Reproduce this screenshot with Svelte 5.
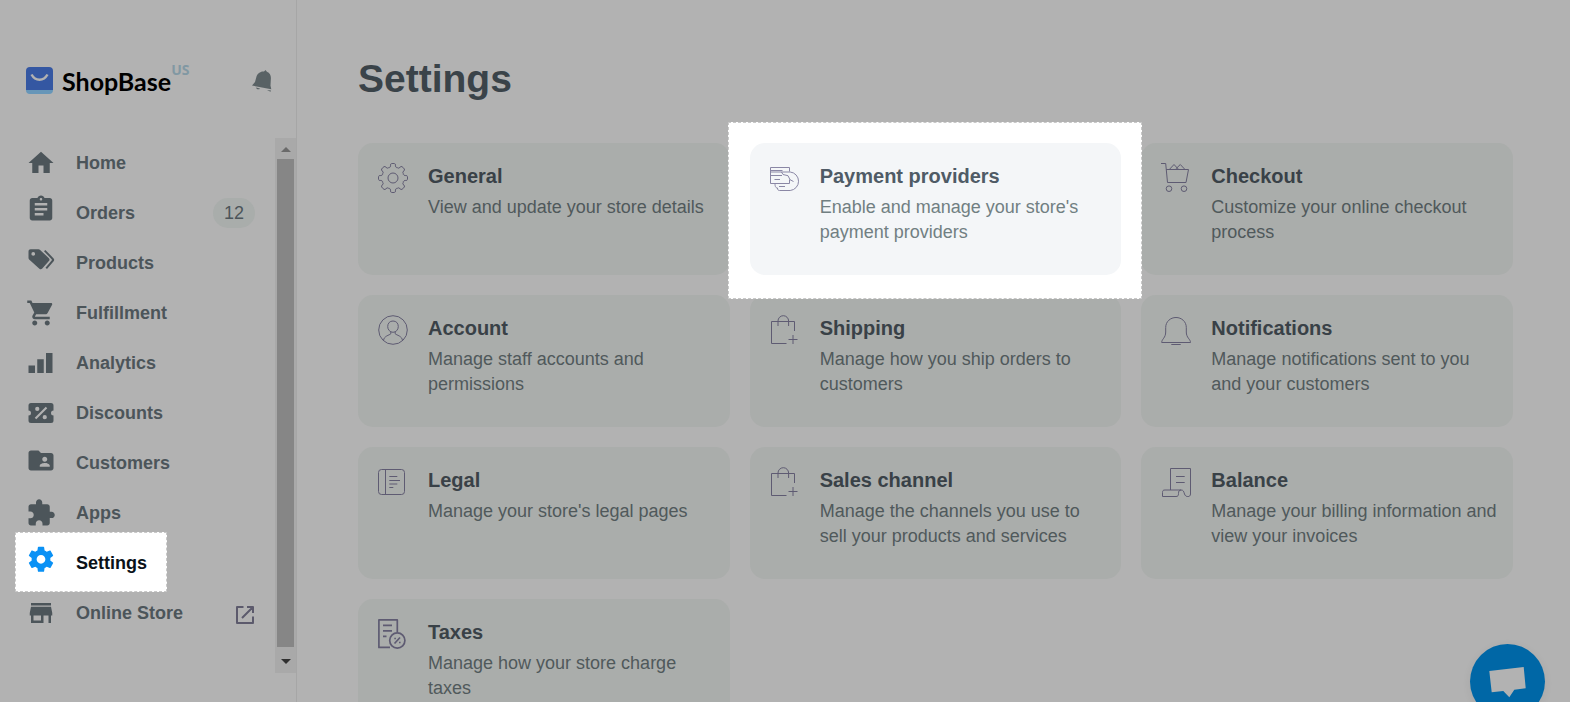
<script lang="ts">
  type NavItem = { label: string; icon: string; shift?: number; badge?: string; external?: boolean; active?: boolean };
  type Card = { title: string; text: string; icon: string; spotlight?: boolean };

  // shift moves the glyph up inside its 24-unit box
  const nav: NavItem[] = [
    { label: 'Home', icon: 'M10 20v-6h4v6h5v-8h3L12 3 2 12h3v8z' },
    {
      label: 'Orders',
      shift: 3,
      badge: '12',
      icon: 'M19 3h-4.18C14.4 1.84 13.3 1 12 1s-2.4.84-2.82 2H5c-1.1 0-2 .9-2 2v14c0 1.1.9 2 2 2h14c1.1 0 2-.9 2-2V5c0-1.1-.9-2-2-2zm-7 0c.55 0 1 .45 1 1s-.45 1-1 1-1-.45-1-1 .45-1 1-1zm2 14H7v-2h7v2zm3-4H7v-2h10v2zm0-4H7V7h10v2z'
    },
    {
      label: 'Products',
      shift: 3,
      icon: 'M3.7 4H10c.5 0 .9.200 1.300.500l7 6.700c.7.700.7 1.500 0 2.200l-5.300 6c-.7.800-1.600.800-2.300.100L2.500 12.200C2.200 11.900 2 11.500 2 11V5.700C2 4.700 2.700 4 3.700 4zM5.800 6.200a1.500 1.500 0 1 0 0 3 1.500 1.500 0 0 0 0-3zM14.400 5.500l1.100-1 6.600 6.800c.6.700.6 1.500 0 2.200L16.800 19.700l-1.200-1 4.900-5.700c.3-.3.3-.700 0-1z'
    },
    {
      label: 'Fulfillment',
      icon: 'M7 18c-1.100 0-1.990.9-1.990 2S5.900 22 7 22s2-.9 2-2-.9-2-2-2zM1 2v2h2l3.600 7.590-1.350 2.450c-.16.28-.25.61-.25.960 0 1.100.9 2 2 2h12v-2H7.420c-.14 0-.25-.11-.25-.25l.03-.12.9-1.630h7.450c.75 0 1.410-.41 1.750-1.030l3.580-6.490c.08-.14.12-.31.12-.48 0-.55-.45-1-1-1H5.210l-.94-2H1zm16 16c-1.100 0-1.990.9-1.990 2s.89 2 1.990 2 2-.9 2-2-.9-2-2-2z'
    },
    { label: 'Analytics', icon: 'M2 14h5.200v6H2zM9 9h5.200v11H9zM16 4h5.200v16H16z' },
    {
      label: 'Discounts',
      icon: 'M22 10V6a2 2 0 0 0-2-2H4a2 2 0 0 0-2 2v4a2 2 0 0 1 0 4v4a2 2 0 0 0 2 2h16a2 2 0 0 0 2-2v-4a2 2 0 0 1 0-4zM9 7a1.700 1.700 0 1 1 0 3.400A1.700 1.700 0 0 1 9 7zm6 10a1.700 1.700 0 1 1 0-3.400 1.700 1.700 0 0 1 0 3.400zm-6.800 0L7 15.800 15.800 7 17 8.200z'
    },
    {
      label: 'Customers',
      shift: 2,
      icon: 'M20 6h-8l-2-2H4c-1.100 0-1.990.9-1.990 2L2 18c0 1.100.9 2 2 2h16c1.100 0 2-.9 2-2V8c0-1.100-.9-2-2-2zm-5 3c1.100 0 2 .9 2 2s-.9 2-2 2-2-.9-2-2 .9-2 2-2zm4 8h-8v-1c0-1.330 2.670-2 4-2s4 .67 4 2v1z'
    },
    {
      label: 'Apps',
      icon: 'M20.500 11H19V7c0-1.100-.9-2-2-2h-4V3.500C13 2.120 11.880 1 10.500 1S8 2.120 8 3.500V5H4c-1.100 0-1.990.9-1.990 2v3.800H3.500c1.490 0 2.700 1.210 2.700 2.700s-1.210 2.700-2.700 2.700H2V20c0 1.100.9 2 2 2h3.800v-1.500c0-1.490 1.210-2.700 2.700-2.700 1.490 0 2.700 1.210 2.700 2.700V22H17c1.100 0 2-.9 2-2v-4h1.500c1.380 0 2.500-1.120 2.500-2.500S21.880 11 20.500 11z'
    },
    {
      label: 'Settings',
      shift: 3,
      active: true,
      icon: 'M19.430 12.980c.04-.32.07-.64.07-.98s-.03-.66-.07-.98l2.110-1.650c.19-.15.24-.42.12-.64l-2-3.460c-.12-.22-.39-.3-.61-.22l-2.490 1c-.52-.4-1.080-.73-1.690-.98l-.38-2.650C14.460 2.180 14.250 2 14 2h-4c-.25 0-.46.18-.49.42l-.38 2.650c-.61.25-1.170.59-1.690.98l-2.490-1c-.23-.09-.49 0-.61.22l-2 3.460c-.13.22-.07.49.12.64l2.110 1.650c-.04.32-.07.65-.07.98s.03.66.07.98l-2.110 1.650c-.19.15-.24.42-.12.64l2 3.460c.12.22.39.3.61.22l2.490-1c.52.4 1.080.73 1.690.98l.38 2.650c.03.24.24.42.49.42h4c.25 0 .46-.18.49-.42l.38-2.650c.61-.25 1.170-.59 1.690-.98l2.490 1c.23.09.49 0 .61-.22l2-3.460c.12-.22.07-.49-.12-.64l-2.110-1.650zM12 15.500c-1.930 0-3.500-1.570-3.500-3.500s1.570-3.500 3.500-3.500 3.500 1.570 3.500 3.500-1.570 3.500-3.500 3.500z'
    },
    {
      label: 'Online Store',
      external: true,
      icon: 'M20 4H4v2h16V4zm1 10v-2l-1-5H4l-1 5v2h1v6h10v-6h4v6h2v-6h1zm-9 4H6v-4h6v4z'
    }
  ];

  const bag = 'M16.500 28.500H1.500v-22h23V16M8 11V6a5.300 5.300 0 0 1 10.600 0v5M18.500 24.500h9M23 20v9';

  const cards: Card[] = [
    { title: 'General', text: 'View and update your store details', icon: gear() },
    {
      title: 'Payment providers',
      text: "Enable and manage your store's payment providers",
      spotlight: true,
      icon: 'M19.500 8.500v-4H.5v16h19v-4M.5 7.500h12M.5 9h19.700a9.300 9.300 0 0 1 0 18.500H9.500c-1.500 0-2-1-2-2.500-1.500 0-2.500-1-2.500-4.500M1 12.500h11M4.500 16.500h5.500M9 23.500h6M11.500 9l1.500 2.500 5 1.200 2 4 3.500 1.800'
    },
    {
      title: 'Checkout',
      text: 'Customize your online checkout process',
      icon: 'M0 .5h4.700l1.800 19H25l2.500-13H5.200M8.300 6.500 13 1.500l4.700 5M14.700 6 19.300 1.500l4.700 5M10.800 25.700a2.800 2.800 0 1 1-5.600 0 2.800 2.800 0 0 1 5.600 0zM25.800 25.700a2.800 2.800 0 1 1-5.600 0 2.800 2.800 0 0 1 5.600 0z'
    },
    {
      title: 'Account',
      text: 'Manage staff accounts and permissions',
      icon: 'M29.300 15A14.300 14.300 0 1 1 .7 15a14.300 14.300 0 0 1 28.600 0zM15 6c3.300 0 5.300 2.300 5.300 5.500S18 17.300 15 17.300s-5.300-2.600-5.300-5.800S11.700 6 15 6zM12.800 16.800v2c-1.500 1.500-6.800 2-7.300 6.700M17.200 16.800v2c1.500 1.500 6.800 2 7.300 6.700'
    },
    { title: 'Shipping', text: 'Manage how you ship orders to customers', icon: bag },
    {
      title: 'Notifications',
      text: 'Manage notifications sent to you and your customers',
      icon: 'M.7 27.500h28.800c0-3.500-4.200-4.500-4.200-10.500v-4.500C25.300 6.500 20.500 2.500 15 2.500S4.700 6.500 4.700 12.500V17c0 6-4 7-4 10.500zM10.300 29.500h9.400'
    },
    {
      title: 'Legal',
      text: "Manage your store's legal pages",
      icon: 'M3.500 2.500h20a3 3 0 0 1 3 3v19a3 3 0 0 1-3 3h-20a3 3 0 0 1-3-3v-19a3 3 0 0 1 3-3zM7.500 2.500v25M11.300 9.500h8M11.300 13.500H22M11.300 17h8M11.300 20.500h4'
    },
    { title: 'Sales channel', text: 'Manage the channels you use to sell your products and services', icon: bag },
    {
      title: 'Balance',
      text: 'Manage your billing information and view your invoices',
      icon: 'M9.500 23V1.500h20V27c0 3.500-5 3.500-6 0-.8-2.500-1-4-3.500-4H4c-2 0-2.500.8-2.500 2.500v4H15c2 0 2.500-1 2.500-3s.5-3.500 2.500-3.500M15 9.500h8.700M15 15.500h8.700'
    },
    { title: 'Taxes', text: 'Manage how your store charge taxes', icon: 'taxes' }
  ];

  function gear() {
    const at = (deg: number, r: number) => {
      const a = (deg * Math.PI) / 180;
      return `${(15 + r * Math.sin(a)).toFixed(1)} ${(15 - r * Math.cos(a)).toFixed(1)}`;
    };
    let d = `M${at(-10, 14)}`;
    for (let t = 0; t < 360; t += 45) {
      d += `Q${at(t - 8, 14.6)} ${at(t, 14.6)}Q${at(t + 8, 14.6)} ${at(t + 10, 14)}`;
      d += `Q${at(t + 13, 10.3)} ${at(t + 22.5, 11.2)}Q${at(t + 32, 10.3)} ${at(t + 35, 14)}`;
    }
    return d + 'ZM20 15a5 5 0 1 1-10 0 5 5 0 0 1 10 0z';
  }
</script>

<div class="layout">
  <aside class="sidebar">
    <header class="brand">
      <a class="logo" href="#home">
        <svg width="27" height="27" viewBox="0 0 27 27" aria-hidden="true">
          <rect y="6" width="27" height="21" rx="4" fill="#6796b8" />
          <path d="M4 0h19a4 4 0 0 1 4 4v19H0V4a4 4 0 0 1 4-4z" fill="#3457a2" />
          <path d="M5.500 7.500c4 7 12 7 16 0" fill="none" stroke="#b2b2b2" stroke-width="2.500" />
        </svg>
        <span class="name">ShopBase</span>
        <sup>US</sup>
      </a>
      <button class="bell" aria-label="Notifications">
        <svg width="20" height="22" viewBox="0 0 20 22">
          <path d="M13.500 0l1.400 1.800c3 1.200 4.100 3.700 4 6.500l-.4 7.500.8 3.500L0 15.500l3-3.500 1.500-5.500c1-3 4-5.500 7.500-5zM4 17.500l4 1c-1 1.500-3.500 1-4-1zM15 20l4 .5-.5 1.200z" />
        </svg>
      </button>
    </header>

    <div class="scroller">
      <nav>
        {#each nav as item}
          <a href="#{item.label}" class:active={item.active}>
            <svg class="glyph" width="30" height="30" viewBox="0 {item.shift ?? 0} 24 24" aria-hidden="true">
              <path d={item.icon} fill-rule="evenodd" />
            </svg>
            <span class="label">{item.label}</span>
            {#if item.badge}
              <span class="badge">{item.badge}</span>
            {/if}
            {#if item.external}
              <svg class="external" width="20" height="20" viewBox="0 0 20 20" aria-hidden="true">
                <path d="M8.500 2H2v16h16v-6.500M12 2h6v6M17.500 2.500 7 13" />
              </svg>
            {/if}
          </a>
        {/each}
      </nav>
      <div class="scrollbar" aria-hidden="true">
        <svg width="10" height="5" viewBox="0 0 10 5"><path d="M0 5 5 0l5 5z" fill="#6a6a6a" /></svg>
        <div class="thumb"></div>
        <svg width="10" height="5" viewBox="0 0 10 5"><path d="M0 0h10L5 5z" fill="#303030" /></svg>
      </div>
    </div>
  </aside>

  <main>
    <h1>Settings</h1>
    <ul class="cards">
      {#each cards as card}
        <li class:spotlight={card.spotlight}>
          <a class="card" href="#{card.title}">
            <svg class="outline" width="30" height="30" viewBox="0 0 30 30" aria-hidden="true">
              {#if card.icon === 'taxes'}
                <g stroke-width="1.700">
                  <path d="M19.300 13V.9H.9v27.500H12M5 6.300h9M5 11.800h9M5 17.300h3.500" />
                  <circle cx="19.300" cy="21.500" r="7.600" />
                  <path d="M16.500 24.500l5.500-6" />
                  <path d="M16.300 19.500h1.600M21 23.500h1.600" />
                </g>
              {:else}
                <path d={card.icon} />
              {/if}
            </svg>
            <div class="body">
              <h2>{card.title}</h2>
              <p>{card.text}</p>
            </div>
          </a>
        </li>
      {/each}
    </ul>
  </main>
</div>

<button class="chat" aria-label="Open chat">
  <svg width="75" height="75" viewBox="0 0 75 75">
    <path d="M19.300 27l34.400-4 2 21.300-11.400 1.400-5 7.600-6-6.300-11.600 1.300z" fill="#b2b2b2" />
  </svg>
</button>

<style>
  :global(body) {
    margin: 0;
    background: #b2b2b2;
    font-family: "Liberation Sans", Arial, sans-serif;
  }

  .layout {
    display: flex;
    height: 100vh;
    overflow: hidden;
  }

  a {
    color: inherit;
    text-decoration: none;
  }

  button {
    padding: 0;
    border: 0;
    background: none;
    cursor: pointer;
  }

  svg {
    display: block;
    flex: none;
  }

  .sidebar {
    display: flex;
    flex-direction: column;
    flex: none;
    box-sizing: border-box;
    width: 297px;
    padding-bottom: 29px;
    border-right: 1px solid #a6a6a6;
  }

  .brand {
    display: flex;
    align-items: center;
    justify-content: space-between;
    box-sizing: border-box;
    height: 138px;
    padding: 23px 24px 0 26px;
  }

  .logo {
    display: flex;
    align-items: center;
  }

  .name {
    margin-left: 9px;
    color: #000;
    font: 700 25px/30px Lato, sans-serif;
  }

  sup {
    align-self: flex-start;
    margin-top: -4px;
    color: #8198a3;
    font: 700 14px/16px "Noto Sans", sans-serif;
  }

  .bell svg {
    fill: #596265;
  }

  .scroller {
    display: flex;
    flex: 1;
    min-height: 0;
  }

  nav {
    flex: 1;
  }

  nav a {
    position: relative;
    display: flex;
    align-items: center;
    height: 50px;
    padding: 0 20px 0 26px;
    color: #4c555a;
    font-size: 18px;
    font-weight: 700;
  }

  .glyph {
    overflow: visible;
    fill: currentColor;
  }

  .label {
    flex: 1;
    margin-left: 20px;
  }

  .badge {
    width: 42px;
    border-radius: 15px;
    background: #a9adab;
    font-weight: 400;
    line-height: 30px;
    text-align: center;
  }

  .external {
    margin-top: 4px;
    fill: none;
    stroke: #5c5a6c;
    stroke-width: 2;
    stroke-linejoin: round;
  }

  nav .active {
    z-index: 1;
    color: #0a1118;
  }

  .active .glyph {
    fill: #0a91f5;
  }

  .active::before,
  .spotlight::before {
    content: "";
    position: absolute;
    z-index: -1;
    border: 1px dashed #c8c8c8;
    background: #fff;
  }

  .active::before {
    inset: -6px 108px -4px 15px;
  }

  .scrollbar {
    display: flex;
    flex-direction: column;
    align-items: center;
    gap: 9px;
    box-sizing: border-box;
    width: 21px;
    padding: 9px 0;
    background: #a9a9a9;
  }

  .thumb {
    flex: 1;
    width: 17px;
    margin: -2px 0 3px;
    background: #868686;
  }

  main {
    flex: 1;
    padding: 55px 57px 20px 61px;
    overflow-y: auto;
    scrollbar-width: none;
  }

  h1 {
    margin: 0 0 40px;
    color: #3a4349;
    font-size: 39px;
    line-height: 48px;
  }

  .cards {
    display: grid;
    grid-template-columns: repeat(3, 1fr);
    grid-auto-rows: minmax(132px, auto);
    gap: 20px;
    margin: 0;
    padding: 0;
    list-style: none;
  }

  li {
    position: relative;
    display: flex;
  }

  .card {
    display: flex;
    flex: 1;
    gap: 20px;
    padding: 20px 15px 20px 20px;
    border-radius: 15px;
    background: #aaadab;
  }

  .body {
    padding-top: 1px;
  }

  .outline {
    fill: none;
    stroke: #5e5b72;
    stroke-linejoin: round;
  }

  h2 {
    margin: 0 0 6px;
    color: #394147;
    font-size: 20px;
    line-height: 25px;
  }

  p {
    margin: 0;
    color: #50595b;
    font-size: 18px;
    line-height: 25px;
  }

  .spotlight {
    z-index: 1;
  }

  .spotlight::before {
    inset: -21px -21px -24px -22px;
  }

  .spotlight .card {
    background: #f4f6f8;
  }

  .spotlight .outline {
    stroke: #8a87a5;
  }

  .spotlight h2 {
    color: #4f5b66;
  }

  .spotlight p {
    color: #717f82;
  }

  .chat {
    position: fixed;
    right: 25px;
    bottom: -17px;
    border-radius: 50%;
    background: #0067a6;
    box-shadow: 0 2px 10px rgba(0, 0, 0, 0.06);
  }
</style>
